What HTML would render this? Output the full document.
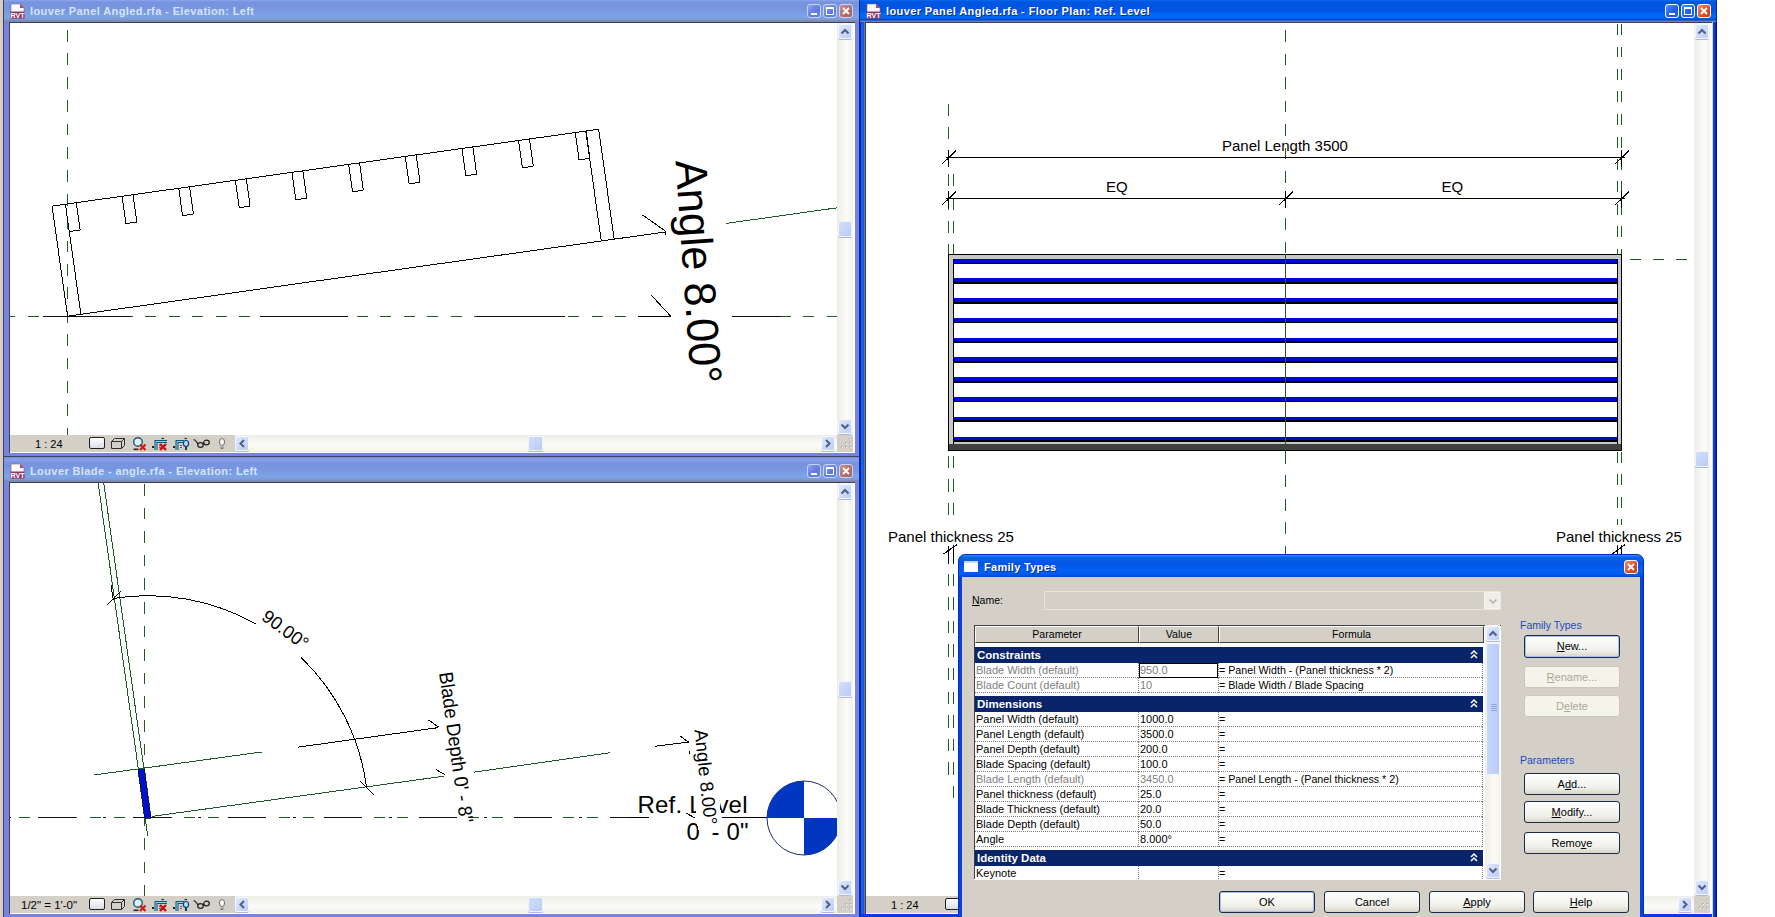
<!DOCTYPE html>
<html><head><meta charset="utf-8">
<style>
*{box-sizing:border-box}
body{margin:0;width:1775px;height:917px;position:relative;overflow:hidden;background:#fff;font-family:"Liberation Sans",sans-serif}
.a{position:absolute}
svg.a{overflow:hidden}
</style></head><body>
<div class="a" style="left:0px;top:0px;width:3px;height:917px;background:#d8ccc4"></div><div class="a" style="left:3px;top:0px;width:857px;height:457px;background:#7783e0;border:1px solid #3c4458;border-top:none"></div><div class="a" style="left:4px;top:0px;width:855px;height:22px;background:linear-gradient(#8aa6ee 0px,#7893df 2px,#7896e0 9px,#7ba5e8 17px,#8294c8 20px,#7888b0 21px)"></div><div class="a" style="left:9px;top:22px;width:846px;height:431px;background:#fff;border-left:1px solid #404050;border-top:1px solid #404050"></div><div class="a" style="left:10px;top:23px;width:843px;height:429px;background:#fff"></div><div class="a" style="left:10px;top:435px;width:843px;height:17px;background:#d4d0c8"></div><div class="a" style="left:837px;top:23px;width:16px;height:412px;background:linear-gradient(90deg,#eeede5,#fbfbf8 60%,#f3f1ea)"></div><div class="a" style="left:838px;top:24px;width:14px;height:15px;background:linear-gradient(135deg,#dfe8fe,#bccdf7);border:1px solid #f4f7ff;border-radius:2px;box-shadow:0 1px 0 #a8b8e0"><svg class="a" style="left:-1px;top:-1px" width="14" height="15"><path d="M3.5 9.5L7.0 6.0L10.5 9.5" fill="none" stroke="#4d6185" stroke-width="2"/></svg></div><div class="a" style="left:838px;top:419px;width:14px;height:15px;background:linear-gradient(135deg,#dfe8fe,#bccdf7);border:1px solid #f4f7ff;border-radius:2px;box-shadow:0 1px 0 #a8b8e0"><svg class="a" style="left:-1px;top:-1px" width="14" height="15"><path d="M3.5 5.5L7.0 9.0L10.5 5.5" fill="none" stroke="#4d6185" stroke-width="2"/></svg></div><div class="a" style="left:838px;top:221px;width:14px;height:16px;background:linear-gradient(135deg,#d3defb,#b9cbf5);border:1px solid #f0f4ff;border-radius:2px;box-shadow:0 1px 0 #a8b8e0"></div><div class="a" style="left:235px;top:435px;width:602px;height:17px;background:linear-gradient(#eeede5,#fbfbf8 60%,#f3f1ea)"></div><div class="a" style="left:235px;top:436px;width:14px;height:15px;background:linear-gradient(135deg,#dfe8fe,#bccdf7);border:1px solid #f4f7ff;border-radius:2px;box-shadow:0 1px 0 #a8b8e0"><svg class="a" style="left:-1px;top:-1px" width="14" height="15"><path d="M9.0 4.0L5.5 7.5L9.0 11.0" fill="none" stroke="#4d6185" stroke-width="2"/></svg></div><div class="a" style="left:821px;top:436px;width:14px;height:15px;background:linear-gradient(135deg,#dfe8fe,#bccdf7);border:1px solid #f4f7ff;border-radius:2px;box-shadow:0 1px 0 #a8b8e0"><svg class="a" style="left:-1px;top:-1px" width="14" height="15"><path d="M5.0 4.0L8.5 7.5L5.0 11.0" fill="none" stroke="#4d6185" stroke-width="2"/></svg></div><div class="a" style="left:528px;top:436px;width:15px;height:15px;background:linear-gradient(135deg,#d3defb,#b9cbf5);border:1px solid #f0f4ff;border-radius:2px;box-shadow:0 1px 0 #a8b8e0"></div><div class="a" style="left:837px;top:435px;width:16px;height:17px;background:#d4d0c8"><svg class="a" style="left:1px;top:0" width="15" height="17"><rect x="11" y="11" width="2" height="2" fill="#b8b4a8"/><rect x="12" y="12" width="1" height="1" fill="#fff"/><rect x="7" y="11" width="2" height="2" fill="#b8b4a8"/><rect x="8" y="12" width="1" height="1" fill="#fff"/><rect x="3" y="11" width="2" height="2" fill="#b8b4a8"/><rect x="4" y="12" width="1" height="1" fill="#fff"/><rect x="11" y="7" width="2" height="2" fill="#b8b4a8"/><rect x="12" y="8" width="1" height="1" fill="#fff"/><rect x="7" y="7" width="2" height="2" fill="#b8b4a8"/><rect x="8" y="8" width="1" height="1" fill="#fff"/><rect x="11" y="3" width="2" height="2" fill="#b8b4a8"/><rect x="12" y="4" width="1" height="1" fill="#fff"/></svg></div><svg class="a" style="left:10px;top:3px" width="15" height="16" viewBox="0 0 15 16"><path d="M1 1h9l4 4v10H1z" fill="#fafafa" stroke="#8a6a8a" stroke-width="0.6"/><path d="M10 1v4h4" fill="#c04070"/><rect x="0.5" y="8.5" width="14" height="7" fill="#8a3a6a"/><text x="7.5" y="15" font-family="Liberation Sans" font-weight="bold" font-size="7.2" fill="#fff" text-anchor="middle">RVT</text></svg><div class="a" style="left:30px;top:3px;width:500px;height:16px;font:bold 11px 'Liberation Sans',sans-serif;letter-spacing:0.4px;color:#d8e2f6;white-space:nowrap;line-height:16px;">louver Panel Angled.rfa - Elevation: Left</div><div class="a" style="left:807px;top:4px;width:14px;height:14px;background:linear-gradient(135deg,#8da2f0,#5f7ae0 60%,#6c84e4);border:1px solid #c8d4fa;border-radius:3px"><div class="a" style="left:3px;top:8px;width:6px;height:2px;background:#fff"></div></div><div class="a" style="left:823px;top:4px;width:14px;height:14px;background:linear-gradient(135deg,#8da2f0,#5f7ae0 60%,#6c84e4);border:1px solid #c8d4fa;border-radius:3px"><div class="a" style="left:2px;top:2px;width:8px;height:8px;border:1px solid #fff;border-top-width:2px"></div></div><div class="a" style="left:839px;top:4px;width:14px;height:14px;background:linear-gradient(135deg,#c89090,#b46a6a 60%,#a86060);border:1px solid #c8d4fa;border-radius:3px"><svg class="a" style="left:0;top:0" width="12" height="12"><path d="M3 3L9 9M9 3L3 9" stroke="#fff" stroke-width="1.8"/></svg></div><div class="a" style="left:10px;top:436px;width:76px;height:17px;font:11px 'Liberation Sans',sans-serif;color:#000;line-height:17px;padding-left:25px;white-space:nowrap">1 : 24</div><div class="a" style="left:89px;top:437px;width:16px;height:12px;background:linear-gradient(#fff,#dcdce8);border:1.5px solid #202020;border-radius:2px"></div><svg class="a" style="left:110px;top:436px" width="16" height="14"><path d="M1.5 5.5h10v7h-10z M1.5 5.5l3-3h10l-3 3 M14.5 2.5v7l-3 3" fill="none" stroke="#303030" stroke-width="1"/></svg><svg class="a" style="left:132px;top:436px" width="16" height="15"><circle cx="6" cy="6" r="4.3" fill="#d8f0ff" stroke="#1c5a6a" stroke-width="1.4"/><path d="M1.5 13.3h5" stroke="#402030" stroke-width="1.6"/><path d="M8 8.5l5.5 5.5M13.5 8.5L8 14" stroke="#d01818" stroke-width="2.2"/></svg><svg class="a" style="left:151px;top:436px" width="18" height="15"><path d="M1 11h2" stroke="#202020" stroke-width="2"/><path d="M5 14V5.5H16" fill="none" stroke="#12506e" stroke-width="3"/><path d="M5 14V5.5H16" fill="none" stroke="#7ae0ff" stroke-width="1"/><path d="M8 9.5h2M8 11.5h2" stroke="#a04060" stroke-width="1"/><path d="M9 8l6 6M15 8l-6 6" stroke="#c81010" stroke-width="2.4"/><path d="M10.5 2.5h2.5" stroke="#303030" stroke-width="1.2"/></svg><svg class="a" style="left:172px;top:436px" width="18" height="15"><path d="M1 11h2" stroke="#202020" stroke-width="2"/><path d="M5 14V5.5H12" fill="none" stroke="#12506e" stroke-width="3"/><path d="M5 14V5.5H12" fill="none" stroke="#7ae0ff" stroke-width="1"/><path d="M8 9.5h2M8 11.5h2" stroke="#a04060" stroke-width="1"/><ellipse cx="14" cy="7.5" rx="2.6" ry="3" fill="#a8e8ff" stroke="#1a3a80" stroke-width="1.2"/><path d="M14 10.5v3.5" stroke="#1a3a50" stroke-width="2"/><path d="M12.5 2.5h2.5" stroke="#303030" stroke-width="1.2"/></svg><svg class="a" style="left:193px;top:436px" width="17" height="14"><path d="M0.5 3.5C2.5 3.5 3.5 6 5 8" fill="none" stroke="#202020" stroke-width="1.2"/><ellipse cx="7.5" cy="9" rx="2.8" ry="2.3" fill="none" stroke="#202020" stroke-width="1.2"/><path d="M10 8.5L11 7" stroke="#202020" stroke-width="1.1"/><ellipse cx="13.5" cy="6.5" rx="2.8" ry="2.3" fill="none" stroke="#202020" stroke-width="1.2"/></svg><svg class="a" style="left:218px;top:436px" width="8" height="14"><ellipse cx="4" cy="6" rx="2.6" ry="3.5" fill="#f4f4f4" stroke="#707070"/><path d="M3 10.5v2h2v-2" stroke="#707070" fill="none"/></svg><svg class="a" style="left:10px;top:23px" width="827" height="412" viewBox="10 23 827 412" font-family="Liberation Sans" shape-rendering="crispEdges"><line x1="67.5" y1="30" x2="67.5" y2="435" stroke="#1e5a26" stroke-width="1" stroke-dasharray="11.8 11.6" stroke-dashoffset="0" shape-rendering="crispEdges"/><line x1="10" y1="316.5" x2="838" y2="316.5" stroke="#1e5a26" stroke-width="1" stroke-dasharray="11 12.5" stroke-dashoffset="5.7" shape-rendering="crispEdges"/><line x1="10" y1="316.5" x2="838" y2="316.5" stroke="#111" stroke-width="1" stroke-dasharray="88 129" stroke-dashoffset="184" shape-rendering="crispEdges"/><g transform="translate(67.5,316) rotate(-8)" fill="none" stroke="#000" stroke-width="1"><path d="M0 0H552V-111H0Z"/><path d="M13.5 0V-111M539 0V-111"/><path d="M13.5 -111V-83.4H24.5V-111"/><path d="M70.7 -111V-83.4H81.7V-111"/><path d="M127.9 -111V-83.4H138.9V-111"/><path d="M185.1 -111V-83.4H196.1V-111"/><path d="M242.3 -111V-83.4H253.3V-111"/><path d="M299.5 -111V-83.4H310.5V-111"/><path d="M356.7 -111V-83.4H367.7V-111"/><path d="M413.9 -111V-83.4H424.9V-111"/><path d="M471.1 -111V-83.4H482.1V-111"/><path d="M528.3 -111V-83.4H539.3V-111"/></g><line x1="614.1" y1="239.2" x2="665.6" y2="231.9" stroke="#000" stroke-width="1" /><line x1="725.0" y1="223.6" x2="844.9" y2="206.7" stroke="#1e5a26" stroke-width="1" /><g transform="translate(675.5,161) rotate(86)"><rect x="-8" y="-46" width="236" height="61" fill="#fff"/><text font-size="44.5" textLength="224" lengthAdjust="spacingAndGlyphs" fill="#000">Angle 8.00°</text></g><line x1="642.4" y1="214.9" x2="665.6" y2="231.2" stroke="#000" stroke-width="1" /><line x1="665.6" y1="231.2" x2="666" y2="235" stroke="#000" stroke-width="1" /><line x1="651.1" y1="295" x2="671" y2="316.5" stroke="#000" stroke-width="1" /><line x1="638" y1="316.5" x2="671" y2="316.5" stroke="#000" stroke-width="1" /></svg><div class="a" style="left:3px;top:457px;width:857px;height:3px;background:linear-gradient(#7d8cd8,#8aa0ea)"></div><div class="a" style="left:3px;top:457px;width:1px;height:461px;background:#3c4458"></div><div class="a" style="left:3px;top:460px;width:857px;height:458px;background:#7783e0;border:1px solid #3c4458;border-top:none"></div><div class="a" style="left:4px;top:460px;width:855px;height:22px;background:linear-gradient(#8aa6ee 0px,#7893df 2px,#7896e0 9px,#7ba5e8 17px,#8294c8 20px,#7888b0 21px)"></div><div class="a" style="left:9px;top:482px;width:846px;height:432px;background:#fff;border-left:1px solid #404050;border-top:1px solid #404050"></div><div class="a" style="left:10px;top:483px;width:843px;height:430px;background:#fff"></div><div class="a" style="left:10px;top:896px;width:843px;height:17px;background:#d4d0c8"></div><div class="a" style="left:837px;top:483px;width:16px;height:413px;background:linear-gradient(90deg,#eeede5,#fbfbf8 60%,#f3f1ea)"></div><div class="a" style="left:838px;top:484px;width:14px;height:15px;background:linear-gradient(135deg,#dfe8fe,#bccdf7);border:1px solid #f4f7ff;border-radius:2px;box-shadow:0 1px 0 #a8b8e0"><svg class="a" style="left:-1px;top:-1px" width="14" height="15"><path d="M3.5 9.5L7.0 6.0L10.5 9.5" fill="none" stroke="#4d6185" stroke-width="2"/></svg></div><div class="a" style="left:838px;top:880px;width:14px;height:15px;background:linear-gradient(135deg,#dfe8fe,#bccdf7);border:1px solid #f4f7ff;border-radius:2px;box-shadow:0 1px 0 #a8b8e0"><svg class="a" style="left:-1px;top:-1px" width="14" height="15"><path d="M3.5 5.5L7.0 9.0L10.5 5.5" fill="none" stroke="#4d6185" stroke-width="2"/></svg></div><div class="a" style="left:838px;top:681px;width:14px;height:16px;background:linear-gradient(135deg,#d3defb,#b9cbf5);border:1px solid #f0f4ff;border-radius:2px;box-shadow:0 1px 0 #a8b8e0"></div><div class="a" style="left:235px;top:896px;width:602px;height:17px;background:linear-gradient(#eeede5,#fbfbf8 60%,#f3f1ea)"></div><div class="a" style="left:235px;top:897px;width:14px;height:15px;background:linear-gradient(135deg,#dfe8fe,#bccdf7);border:1px solid #f4f7ff;border-radius:2px;box-shadow:0 1px 0 #a8b8e0"><svg class="a" style="left:-1px;top:-1px" width="14" height="15"><path d="M9.0 4.0L5.5 7.5L9.0 11.0" fill="none" stroke="#4d6185" stroke-width="2"/></svg></div><div class="a" style="left:821px;top:897px;width:14px;height:15px;background:linear-gradient(135deg,#dfe8fe,#bccdf7);border:1px solid #f4f7ff;border-radius:2px;box-shadow:0 1px 0 #a8b8e0"><svg class="a" style="left:-1px;top:-1px" width="14" height="15"><path d="M5.0 4.0L8.5 7.5L5.0 11.0" fill="none" stroke="#4d6185" stroke-width="2"/></svg></div><div class="a" style="left:528px;top:897px;width:15px;height:15px;background:linear-gradient(135deg,#d3defb,#b9cbf5);border:1px solid #f0f4ff;border-radius:2px;box-shadow:0 1px 0 #a8b8e0"></div><div class="a" style="left:837px;top:896px;width:16px;height:17px;background:#d4d0c8"><svg class="a" style="left:1px;top:0" width="15" height="17"><rect x="11" y="11" width="2" height="2" fill="#b8b4a8"/><rect x="12" y="12" width="1" height="1" fill="#fff"/><rect x="7" y="11" width="2" height="2" fill="#b8b4a8"/><rect x="8" y="12" width="1" height="1" fill="#fff"/><rect x="3" y="11" width="2" height="2" fill="#b8b4a8"/><rect x="4" y="12" width="1" height="1" fill="#fff"/><rect x="11" y="7" width="2" height="2" fill="#b8b4a8"/><rect x="12" y="8" width="1" height="1" fill="#fff"/><rect x="7" y="7" width="2" height="2" fill="#b8b4a8"/><rect x="8" y="8" width="1" height="1" fill="#fff"/><rect x="11" y="3" width="2" height="2" fill="#b8b4a8"/><rect x="12" y="4" width="1" height="1" fill="#fff"/></svg></div><svg class="a" style="left:10px;top:463px" width="15" height="16" viewBox="0 0 15 16"><path d="M1 1h9l4 4v10H1z" fill="#fafafa" stroke="#8a6a8a" stroke-width="0.6"/><path d="M10 1v4h4" fill="#c04070"/><rect x="0.5" y="8.5" width="14" height="7" fill="#8a3a6a"/><text x="7.5" y="15" font-family="Liberation Sans" font-weight="bold" font-size="7.2" fill="#fff" text-anchor="middle">RVT</text></svg><div class="a" style="left:30px;top:463px;width:500px;height:16px;font:bold 11px 'Liberation Sans',sans-serif;letter-spacing:0.4px;color:#d8e2f6;white-space:nowrap;line-height:16px;">Louver Blade - angle.rfa - Elevation: Left</div><div class="a" style="left:807px;top:464px;width:14px;height:14px;background:linear-gradient(135deg,#8da2f0,#5f7ae0 60%,#6c84e4);border:1px solid #c8d4fa;border-radius:3px"><div class="a" style="left:3px;top:8px;width:6px;height:2px;background:#fff"></div></div><div class="a" style="left:823px;top:464px;width:14px;height:14px;background:linear-gradient(135deg,#8da2f0,#5f7ae0 60%,#6c84e4);border:1px solid #c8d4fa;border-radius:3px"><div class="a" style="left:2px;top:2px;width:8px;height:8px;border:1px solid #fff;border-top-width:2px"></div></div><div class="a" style="left:839px;top:464px;width:14px;height:14px;background:linear-gradient(135deg,#c89090,#b46a6a 60%,#a86060);border:1px solid #c8d4fa;border-radius:3px"><svg class="a" style="left:0;top:0" width="12" height="12"><path d="M3 3L9 9M9 3L3 9" stroke="#fff" stroke-width="1.8"/></svg></div><div class="a" style="left:10px;top:897px;width:76px;height:17px;font:11.5px 'Liberation Sans',sans-serif;color:#000;line-height:17px;padding-left:11px;white-space:nowrap">1/2" = 1'-0"</div><div class="a" style="left:89px;top:898px;width:16px;height:12px;background:linear-gradient(#fff,#dcdce8);border:1.5px solid #202020;border-radius:2px"></div><svg class="a" style="left:110px;top:897px" width="16" height="14"><path d="M1.5 5.5h10v7h-10z M1.5 5.5l3-3h10l-3 3 M14.5 2.5v7l-3 3" fill="none" stroke="#303030" stroke-width="1"/></svg><svg class="a" style="left:132px;top:897px" width="16" height="15"><circle cx="6" cy="6" r="4.3" fill="#d8f0ff" stroke="#1c5a6a" stroke-width="1.4"/><path d="M1.5 13.3h5" stroke="#402030" stroke-width="1.6"/><path d="M8 8.5l5.5 5.5M13.5 8.5L8 14" stroke="#d01818" stroke-width="2.2"/></svg><svg class="a" style="left:151px;top:897px" width="18" height="15"><path d="M1 11h2" stroke="#202020" stroke-width="2"/><path d="M5 14V5.5H16" fill="none" stroke="#12506e" stroke-width="3"/><path d="M5 14V5.5H16" fill="none" stroke="#7ae0ff" stroke-width="1"/><path d="M8 9.5h2M8 11.5h2" stroke="#a04060" stroke-width="1"/><path d="M9 8l6 6M15 8l-6 6" stroke="#c81010" stroke-width="2.4"/><path d="M10.5 2.5h2.5" stroke="#303030" stroke-width="1.2"/></svg><svg class="a" style="left:172px;top:897px" width="18" height="15"><path d="M1 11h2" stroke="#202020" stroke-width="2"/><path d="M5 14V5.5H12" fill="none" stroke="#12506e" stroke-width="3"/><path d="M5 14V5.5H12" fill="none" stroke="#7ae0ff" stroke-width="1"/><path d="M8 9.5h2M8 11.5h2" stroke="#a04060" stroke-width="1"/><ellipse cx="14" cy="7.5" rx="2.6" ry="3" fill="#a8e8ff" stroke="#1a3a80" stroke-width="1.2"/><path d="M14 10.5v3.5" stroke="#1a3a50" stroke-width="2"/><path d="M12.5 2.5h2.5" stroke="#303030" stroke-width="1.2"/></svg><svg class="a" style="left:193px;top:897px" width="17" height="14"><path d="M0.5 3.5C2.5 3.5 3.5 6 5 8" fill="none" stroke="#202020" stroke-width="1.2"/><ellipse cx="7.5" cy="9" rx="2.8" ry="2.3" fill="none" stroke="#202020" stroke-width="1.2"/><path d="M10 8.5L11 7" stroke="#202020" stroke-width="1.1"/><ellipse cx="13.5" cy="6.5" rx="2.8" ry="2.3" fill="none" stroke="#202020" stroke-width="1.2"/></svg><svg class="a" style="left:218px;top:897px" width="8" height="14"><ellipse cx="4" cy="6" rx="2.6" ry="3.5" fill="#f4f4f4" stroke="#707070"/><path d="M3 10.5v2h2v-2" stroke="#707070" fill="none"/></svg><svg class="a" style="left:10px;top:483px" width="827" height="413" viewBox="10 483 827 413" font-family="Liberation Sans" shape-rendering="crispEdges"><line x1="144.5" y1="484" x2="144.5" y2="896" stroke="#1e5a26" stroke-width="1" stroke-dasharray="11.5 12.1" stroke-dashoffset="0" shape-rendering="crispEdges"/><line x1="10" y1="817.5" x2="630" y2="817.5" stroke="#1e5a26" stroke-width="1" stroke-dasharray="11 12.65" stroke-dashoffset="14.75" shape-rendering="crispEdges"/><line x1="10" y1="817.5" x2="630" y2="817.5" stroke="#111" stroke-width="1" stroke-dasharray="38 27 3 27.3" stroke-dashoffset="67.5" shape-rendering="crispEdges"/><line x1="98" y1="482" x2="147.75145548464658" y2="836" stroke="#1e5a26" stroke-width="1" /><line x1="103.6" y1="482" x2="144.07576039428875" y2="770" stroke="#1e5a26" stroke-width="1" /><path d="M138 769L144.3 768.2L151 818L144.5 818Z" fill="#0010d0" stroke="#000" stroke-width="0.8"/><line x1="93.9" y1="775" x2="261.6" y2="752" stroke="#1e5a26" stroke-width="1" /><line x1="151.8" y1="816.4" x2="443.9" y2="776.2" stroke="#1e5a26" stroke-width="1" /><line x1="473.9" y1="772.2" x2="609.9" y2="752.7" stroke="#1e5a26" stroke-width="1" /><line x1="297.6" y1="747.2" x2="437.7" y2="727.7" stroke="#000" stroke-width="1" /><line x1="428.5" y1="720" x2="438.5" y2="727" stroke="#000" stroke-width="1" /><line x1="436" y1="769.6" x2="445" y2="774.7" stroke="#000" stroke-width="1" /><text transform="translate(439,673) rotate(82)" font-size="19.5" textLength="152" lengthAdjust="spacingAndGlyphs" fill="#000">Blade Depth 0' - 8"</text><path d="M113.5 598.4A220.5 220.5 0 0 1 256.6 624.3" fill="none" stroke="#000" stroke-width="1"/><path d="M301.2 657.6A220.5 220.5 0 0 1 366.6 787.4" fill="none" stroke="#000" stroke-width="1"/><line x1="106.50620045862911" y1="605.4147208987722" x2="120.50620045862911" y2="591.4147208987722" stroke="#000" stroke-width="1" /><line x1="111.00620045862911" y1="585.4147208987722" x2="113.50620045862911" y2="600.4147208987722" stroke="#000" stroke-width="1" /><line x1="359.6135919329252" y1="780.4189746154786" x2="373.6135919329252" y2="794.4189746154786" stroke="#000" stroke-width="1" /><text transform="translate(260.5,619) rotate(36.5)" font-size="18.2" fill="#000">90.00°</text><line x1="655" y1="746.2" x2="689" y2="742" stroke="#000" stroke-width="1" /><line x1="679.9" y1="735.9" x2="689" y2="742.4" stroke="#000" stroke-width="1" /><line x1="689.5" y1="744" x2="689.5" y2="758" stroke="#000" stroke-width="1" stroke-dasharray="3 4"/><line x1="686" y1="813" x2="695" y2="818" stroke="#000" stroke-width="1" /><line x1="722" y1="817.5" x2="770" y2="817.5" stroke="#000" stroke-width="1" shape-rendering="crispEdges"/><line x1="630" y1="817.5" x2="649" y2="817.5" stroke="#000" stroke-width="1" shape-rendering="crispEdges"/><text x="637.5" y="812.8" font-size="24" textLength="110" lengthAdjust="spacing" fill="#000">Ref. Level</text><text x="686.5" y="840" font-size="24" textLength="62" lengthAdjust="spacing" fill="#000">0' - 0"</text><g transform="translate(694.5,730) rotate(84)"><rect x="-3" y="-17.5" width="103" height="24.5" fill="#fff"/><text x="0" y="0" font-size="18.5" fill="#000">Angle 8.00°</text></g><g transform="translate(804,818)" shape-rendering="geometricPrecision"><circle r="37" fill="#fff" stroke="#1c2c70" stroke-width="1"/><path d="M0 0V-37A37 37 0 0 0 -37 0Z" fill="#0036c0"/><path d="M0 0V37A37 37 0 0 0 37 0Z" fill="#0036c0"/></g></svg><div class="a" style="left:859px;top:0px;width:858px;height:918px;background:#0b3bd8;border:1px solid #0b2a9a;border-top:none"></div><div class="a" style="left:860px;top:0px;width:856px;height:22px;background:linear-gradient(#0a6af0 0px,#0055e0 2px,#0055e2 12px,#0066f8 13px,#0066f8 18px,#0a40c0 20px,#6080c0 21px)"></div><div class="a" style="left:865px;top:22px;width:847px;height:892px;background:#fff;border-left:1px solid #404050;border-top:1px solid #404050"></div><div class="a" style="left:866px;top:23px;width:844px;height:890px;background:#fff"></div><div class="a" style="left:866px;top:896px;width:844px;height:17px;background:#d4d0c8"></div><div class="a" style="left:1694px;top:23px;width:16px;height:873px;background:linear-gradient(90deg,#eeede5,#fbfbf8 60%,#f3f1ea)"></div><div class="a" style="left:1695px;top:24px;width:14px;height:15px;background:linear-gradient(135deg,#dfe8fe,#bccdf7);border:1px solid #f4f7ff;border-radius:2px;box-shadow:0 1px 0 #a8b8e0"><svg class="a" style="left:-1px;top:-1px" width="14" height="15"><path d="M3.5 9.5L7.0 6.0L10.5 9.5" fill="none" stroke="#4d6185" stroke-width="2"/></svg></div><div class="a" style="left:1695px;top:880px;width:14px;height:15px;background:linear-gradient(135deg,#dfe8fe,#bccdf7);border:1px solid #f4f7ff;border-radius:2px;box-shadow:0 1px 0 #a8b8e0"><svg class="a" style="left:-1px;top:-1px" width="14" height="15"><path d="M3.5 5.5L7.0 9.0L10.5 5.5" fill="none" stroke="#4d6185" stroke-width="2"/></svg></div><div class="a" style="left:1695px;top:451px;width:14px;height:16px;background:linear-gradient(135deg,#d3defb,#b9cbf5);border:1px solid #f0f4ff;border-radius:2px;box-shadow:0 1px 0 #a8b8e0"></div><div class="a" style="left:1091px;top:896px;width:603px;height:17px;background:linear-gradient(#eeede5,#fbfbf8 60%,#f3f1ea)"></div><div class="a" style="left:1091px;top:897px;width:14px;height:15px;background:linear-gradient(135deg,#dfe8fe,#bccdf7);border:1px solid #f4f7ff;border-radius:2px;box-shadow:0 1px 0 #a8b8e0"><svg class="a" style="left:-1px;top:-1px" width="14" height="15"><path d="M9.0 4.0L5.5 7.5L9.0 11.0" fill="none" stroke="#4d6185" stroke-width="2"/></svg></div><div class="a" style="left:1678px;top:897px;width:14px;height:15px;background:linear-gradient(135deg,#dfe8fe,#bccdf7);border:1px solid #f4f7ff;border-radius:2px;box-shadow:0 1px 0 #a8b8e0"><svg class="a" style="left:-1px;top:-1px" width="14" height="15"><path d="M5.0 4.0L8.5 7.5L5.0 11.0" fill="none" stroke="#4d6185" stroke-width="2"/></svg></div><div class="a" style="left:1200px;top:897px;width:15px;height:15px;background:linear-gradient(135deg,#d3defb,#b9cbf5);border:1px solid #f0f4ff;border-radius:2px;box-shadow:0 1px 0 #a8b8e0"></div><div class="a" style="left:1694px;top:896px;width:16px;height:17px;background:#d4d0c8"><svg class="a" style="left:1px;top:0" width="15" height="17"><rect x="11" y="11" width="2" height="2" fill="#b8b4a8"/><rect x="12" y="12" width="1" height="1" fill="#fff"/><rect x="7" y="11" width="2" height="2" fill="#b8b4a8"/><rect x="8" y="12" width="1" height="1" fill="#fff"/><rect x="3" y="11" width="2" height="2" fill="#b8b4a8"/><rect x="4" y="12" width="1" height="1" fill="#fff"/><rect x="11" y="7" width="2" height="2" fill="#b8b4a8"/><rect x="12" y="8" width="1" height="1" fill="#fff"/><rect x="7" y="7" width="2" height="2" fill="#b8b4a8"/><rect x="8" y="8" width="1" height="1" fill="#fff"/><rect x="11" y="3" width="2" height="2" fill="#b8b4a8"/><rect x="12" y="4" width="1" height="1" fill="#fff"/></svg></div><svg class="a" style="left:866px;top:3px" width="15" height="16" viewBox="0 0 15 16"><path d="M1 1h9l4 4v10H1z" fill="#fafafa" stroke="#8a6a8a" stroke-width="0.6"/><path d="M10 1v4h4" fill="#c04070"/><rect x="0.5" y="8.5" width="14" height="7" fill="#8a3a6a"/><text x="7.5" y="15" font-family="Liberation Sans" font-weight="bold" font-size="7.2" fill="#fff" text-anchor="middle">RVT</text></svg><div class="a" style="left:886px;top:3px;width:500px;height:16px;font:bold 11px 'Liberation Sans',sans-serif;letter-spacing:0.4px;color:#ffffff;white-space:nowrap;line-height:16px;text-shadow:1px 1px 0 #0a2a90;">louver Panel Angled.rfa - Floor Plan: Ref. Level</div><div class="a" style="left:1665px;top:4px;width:14px;height:14px;background:linear-gradient(135deg,#4f8cff,#1f5ce8 60%,#2a60e0);border:1px solid #ffffff;border-radius:3px"><div class="a" style="left:3px;top:8px;width:6px;height:2px;background:#fff"></div></div><div class="a" style="left:1681px;top:4px;width:14px;height:14px;background:linear-gradient(135deg,#4f8cff,#1f5ce8 60%,#2a60e0);border:1px solid #ffffff;border-radius:3px"><div class="a" style="left:2px;top:2px;width:8px;height:8px;border:1px solid #fff;border-top-width:2px"></div></div><div class="a" style="left:1697px;top:4px;width:14px;height:14px;background:linear-gradient(135deg,#f28a6a,#e0502a 55%,#c8401c);border:1px solid #ffffff;border-radius:3px"><svg class="a" style="left:0;top:0" width="12" height="12"><path d="M3 3L9 9M9 3L3 9" stroke="#fff" stroke-width="1.8"/></svg></div><div class="a" style="left:866px;top:897px;width:76px;height:17px;font:11px 'Liberation Sans',sans-serif;color:#000;line-height:17px;padding-left:25px;white-space:nowrap">1 : 24</div><div class="a" style="left:945px;top:898px;width:16px;height:12px;background:linear-gradient(#fff,#dcdce8);border:1.5px solid #202020;border-radius:2px"></div><svg class="a" style="left:966px;top:897px" width="16" height="14"><path d="M1.5 5.5h10v7h-10z M1.5 5.5l3-3h10l-3 3 M14.5 2.5v7l-3 3" fill="none" stroke="#303030" stroke-width="1"/></svg><svg class="a" style="left:988px;top:897px" width="16" height="15"><circle cx="6" cy="6" r="4.3" fill="#d8f0ff" stroke="#1c5a6a" stroke-width="1.4"/><path d="M1.5 13.3h5" stroke="#402030" stroke-width="1.6"/><path d="M8 8.5l5.5 5.5M13.5 8.5L8 14" stroke="#d01818" stroke-width="2.2"/></svg><svg class="a" style="left:1007px;top:897px" width="18" height="15"><path d="M1 11h2" stroke="#202020" stroke-width="2"/><path d="M5 14V5.5H16" fill="none" stroke="#12506e" stroke-width="3"/><path d="M5 14V5.5H16" fill="none" stroke="#7ae0ff" stroke-width="1"/><path d="M8 9.5h2M8 11.5h2" stroke="#a04060" stroke-width="1"/><path d="M9 8l6 6M15 8l-6 6" stroke="#c81010" stroke-width="2.4"/><path d="M10.5 2.5h2.5" stroke="#303030" stroke-width="1.2"/></svg><svg class="a" style="left:1028px;top:897px" width="18" height="15"><path d="M1 11h2" stroke="#202020" stroke-width="2"/><path d="M5 14V5.5H12" fill="none" stroke="#12506e" stroke-width="3"/><path d="M5 14V5.5H12" fill="none" stroke="#7ae0ff" stroke-width="1"/><path d="M8 9.5h2M8 11.5h2" stroke="#a04060" stroke-width="1"/><ellipse cx="14" cy="7.5" rx="2.6" ry="3" fill="#a8e8ff" stroke="#1a3a80" stroke-width="1.2"/><path d="M14 10.5v3.5" stroke="#1a3a50" stroke-width="2"/><path d="M12.5 2.5h2.5" stroke="#303030" stroke-width="1.2"/></svg><svg class="a" style="left:1049px;top:897px" width="17" height="14"><path d="M0.5 3.5C2.5 3.5 3.5 6 5 8" fill="none" stroke="#202020" stroke-width="1.2"/><ellipse cx="7.5" cy="9" rx="2.8" ry="2.3" fill="none" stroke="#202020" stroke-width="1.2"/><path d="M10 8.5L11 7" stroke="#202020" stroke-width="1.1"/><ellipse cx="13.5" cy="6.5" rx="2.8" ry="2.3" fill="none" stroke="#202020" stroke-width="1.2"/></svg><svg class="a" style="left:1074px;top:897px" width="8" height="14"><ellipse cx="4" cy="6" rx="2.6" ry="3.5" fill="#f4f4f4" stroke="#707070"/><path d="M3 10.5v2h2v-2" stroke="#707070" fill="none"/></svg><svg class="a" style="left:866px;top:23px" width="828" height="873" viewBox="866 23 828 873" font-family="Liberation Sans" shape-rendering="crispEdges"><line x1="948.5" y1="104" x2="948.5" y2="254" stroke="#1e5a26" stroke-width="1" stroke-dasharray="12 11.4" stroke-dashoffset="0" shape-rendering="crispEdges"/><line x1="953.5" y1="174.2" x2="953.5" y2="254" stroke="#1e5a26" stroke-width="1" stroke-dasharray="12 11.4" stroke-dashoffset="0" shape-rendering="crispEdges"/><line x1="948.5" y1="455.5" x2="948.5" y2="775" stroke="#1e5a26" stroke-width="1" stroke-dasharray="12.5 11.1" stroke-dashoffset="0" shape-rendering="crispEdges"/><line x1="953.5" y1="455.5" x2="953.5" y2="801" stroke="#1e5a26" stroke-width="1" stroke-dasharray="12.5 11.1" stroke-dashoffset="0" shape-rendering="crispEdges"/><line x1="1285.5" y1="30" x2="1285.5" y2="254" stroke="#1e5a26" stroke-width="1" stroke-dasharray="11.5 12" stroke-dashoffset="0" shape-rendering="crispEdges"/><line x1="1285.5" y1="254" x2="1285.5" y2="452" stroke="#1e5a26" stroke-width="1" /><line x1="1285.5" y1="452" x2="1285.5" y2="896" stroke="#1e5a26" stroke-width="1" stroke-dasharray="12 11.4" stroke-dashoffset="0" shape-rendering="crispEdges"/><line x1="1617.5" y1="24" x2="1617.5" y2="896" stroke="#1e5a26" stroke-width="1" stroke-dasharray="11 11.5" stroke-dashoffset="0" shape-rendering="crispEdges"/><line x1="1621.5" y1="24" x2="1621.5" y2="896" stroke="#1e5a26" stroke-width="1" stroke-dasharray="11 11.5" stroke-dashoffset="0" shape-rendering="crispEdges"/><line x1="1630" y1="259.5" x2="1694" y2="259.5" stroke="#1e5a26" stroke-width="1" stroke-dasharray="11 12" stroke-dashoffset="0" shape-rendering="crispEdges"/><line x1="946" y1="157.5" x2="1625" y2="157.5" stroke="#000" stroke-width="1" shape-rendering="crispEdges"/><line x1="946" y1="198.5" x2="1625" y2="198.5" stroke="#000" stroke-width="1" shape-rendering="crispEdges"/><line x1="948.5" y1="150" x2="948.5" y2="167" stroke="#000" stroke-width="1" shape-rendering="crispEdges"/><line x1="942.0" y1="164" x2="956.0" y2="150.5" stroke="#000" stroke-width="1.2" /><line x1="1621.5" y1="150" x2="1621.5" y2="167" stroke="#000" stroke-width="1" shape-rendering="crispEdges"/><line x1="1615.0" y1="164" x2="1629.0" y2="150.5" stroke="#000" stroke-width="1.2" /><line x1="948.5" y1="191" x2="948.5" y2="208" stroke="#000" stroke-width="1" shape-rendering="crispEdges"/><line x1="942.0" y1="205" x2="956.0" y2="191.5" stroke="#000" stroke-width="1.2" /><line x1="1285.5" y1="191" x2="1285.5" y2="208" stroke="#000" stroke-width="1" shape-rendering="crispEdges"/><line x1="1279.0" y1="205" x2="1293.0" y2="191.5" stroke="#000" stroke-width="1.2" /><line x1="1621.5" y1="191" x2="1621.5" y2="208" stroke="#000" stroke-width="1" shape-rendering="crispEdges"/><line x1="1615.0" y1="205" x2="1629.0" y2="191.5" stroke="#000" stroke-width="1.2" /><text x="1222" y="150.5" font-size="15" fill="#000">Panel Length 3500</text><text x="1106" y="192" font-size="15" fill="#000">EQ</text><text x="1441.5" y="192" font-size="15" fill="#000">EQ</text><rect x="948" y="254" width="674" height="197" fill="#c8c8c8" /><rect x="953.5" y="259" width="663.5" height="182" fill="#fff" /><rect x="948" y="444" width="674" height="7" fill="#404040" /><rect x="953.5" y="259" width="663.5" height="3.6" fill="#0008d8"/><rect x="953.5" y="262.6" width="663.5" height="1.8" fill="#000"/><rect x="953.5" y="278.3" width="663.5" height="3.6" fill="#0008d8"/><rect x="953.5" y="281.90000000000003" width="663.5" height="1.8" fill="#000"/><rect x="953.5" y="298.2" width="663.5" height="3.6" fill="#0008d8"/><rect x="953.5" y="301.8" width="663.5" height="1.8" fill="#000"/><rect x="953.5" y="318" width="663.5" height="3.6" fill="#0008d8"/><rect x="953.5" y="321.6" width="663.5" height="1.8" fill="#000"/><rect x="953.5" y="337.6" width="663.5" height="3.6" fill="#0008d8"/><rect x="953.5" y="341.20000000000005" width="663.5" height="1.8" fill="#000"/><rect x="953.5" y="357.3" width="663.5" height="3.6" fill="#0008d8"/><rect x="953.5" y="360.90000000000003" width="663.5" height="1.8" fill="#000"/><rect x="953.5" y="377.2" width="663.5" height="3.6" fill="#0008d8"/><rect x="953.5" y="380.8" width="663.5" height="1.8" fill="#000"/><rect x="953.5" y="397" width="663.5" height="3.6" fill="#0008d8"/><rect x="953.5" y="400.6" width="663.5" height="1.8" fill="#000"/><rect x="953.5" y="416.6" width="663.5" height="3.6" fill="#0008d8"/><rect x="953.5" y="420.20000000000005" width="663.5" height="1.8" fill="#000"/><rect x="953.5" y="436.5" width="663.5" height="3.6" fill="#0008d8"/><rect x="953.5" y="440.1" width="663.5" height="1.8" fill="#000"/><path d="M948.5 254.5H1621.5V450.5H948.5Z M953.5 259V444 M1617 259V444" fill="none" stroke="#000" stroke-width="1" shape-rendering="crispEdges"/><line x1="1285.5" y1="254" x2="1285.5" y2="451" stroke="#1e5a26" stroke-width="1" shape-rendering="crispEdges"/><rect x="886" y="525" width="130" height="20" fill="#fff"/><rect x="1553" y="525" width="131" height="20" fill="#fff"/><text x="888" y="541.8" font-size="15" fill="#000">Panel thickness 25</text><text x="1556" y="541.8" font-size="15" fill="#000">Panel thickness 25</text><line x1="948.5" y1="546" x2="948.5" y2="564" stroke="#000" stroke-width="1" shape-rendering="crispEdges"/><line x1="953.5" y1="545" x2="953.5" y2="564" stroke="#000" stroke-width="1" shape-rendering="crispEdges"/><line x1="943.5" y1="554" x2="957.0" y2="544.5" stroke="#000" stroke-width="1.2" /><line x1="1617.5" y1="546" x2="1617.5" y2="564" stroke="#000" stroke-width="1" shape-rendering="crispEdges"/><line x1="1621.5" y1="545" x2="1621.5" y2="564" stroke="#000" stroke-width="1" shape-rendering="crispEdges"/><line x1="1612.5" y1="554" x2="1625.0" y2="544.5" stroke="#000" stroke-width="1.2" /></svg><div class="a" style="left:860px;top:22px;width:5px;height:892px;background:linear-gradient(90deg,#0a1cc8 0,#0a1cc8 1px,#1462f4 1px,#1462f4 3px,#1a58c0 3px,#1a58c0 4px,#5a78b0 4px)"></div><div class="a" style="left:1712px;top:22px;width:5px;height:895px;background:linear-gradient(90deg,#c8d8f0 0,#c8d8f0 1px,#1440c8 1px,#1440c8 3px,#0a28b0 3px,#0a28b0 4px,#001070 4px)"></div><div class="a" style="left:958px;top:554px;width:686px;height:367px;background:#0842d8;border-radius:7px 7px 0 0;border:1px solid #0030b8"></div><div class="a" style="left:959px;top:555px;width:684px;height:22px;background:linear-gradient(#3d8ef8 0px,#0b62ec 2px,#0054e4 9px,#0062f4 15px,#005cf0 19px,#0046d0 22px);border-radius:6px 6px 0 0"></div><div class="a" style="left:962px;top:577px;width:678px;height:340px;background:#d4d0c8"></div><div class="a" style="left:964px;top:561px;width:14px;height:11px;background:#fdfdfd;border-top:2px solid #c8d8f8"></div><div class="a" style="left:984px;top:559px;width:200px;height:16px;font:bold 11px 'Liberation Sans',sans-serif;letter-spacing:0.3px;color:#fff;line-height:16px;white-space:nowrap;text-shadow:1px 1px 0 #0a2a80">Family Types</div><div class="a" style="left:1624px;top:560px;width:14px;height:14px;background:linear-gradient(135deg,#f09070,#e04a20 60%,#c83a10);border:1px solid #fff;border-radius:3px"><svg class="a" style="left:0;top:0" width="12" height="12"><path d="M3 3L9 9M9 3L3 9" stroke="#fff" stroke-width="1.8"/></svg></div><div class="a" style="left:972px;top:593px;width:60px;height:14px;font:10.5px 'Liberation Sans',sans-serif;color:#000;line-height:14px"><u>N</u>ame:</div><div class="a" style="left:1044px;top:591px;width:457px;height:19px;background:#d4d0c8;border:1px solid #e8e6dc"></div><div class="a" style="left:1484px;top:592px;width:16px;height:17px;background:#eeede6;border:1px solid #f6f5f0"><svg class="a" style="left:0;top:0" width="16" height="17"><path d="M4.5 6.5L8 10L11.5 6.5" fill="none" stroke="#b0aca0" stroke-width="1.5"/></svg></div><div class="a" style="left:974px;top:625px;width:527px;height:255px;background:#fff;border-left:1px solid #404040;border-top:1px solid #404040"></div><div class="a" style="left:975px;top:626px;width:164px;height:17px;background:#d4d0c8;border-left:1px solid #fff;border-top:1px solid #fff;border-right:1px solid #404040;border-bottom:1px solid #404040;font:10.6px 'Liberation Sans',sans-serif;text-align:center;line-height:15px;color:#000">Parameter</div><div class="a" style="left:1139px;top:626px;width:80px;height:17px;background:#d4d0c8;border-left:1px solid #fff;border-top:1px solid #fff;border-right:1px solid #404040;border-bottom:1px solid #404040;font:10.6px 'Liberation Sans',sans-serif;text-align:center;line-height:15px;color:#000">Value</div><div class="a" style="left:1219px;top:626px;width:265px;height:17px;background:#d4d0c8;border-left:1px solid #fff;border-top:1px solid #fff;border-right:1px solid #404040;border-bottom:1px solid #404040;font:10.6px 'Liberation Sans',sans-serif;text-align:center;line-height:15px;color:#000">Formula</div><div class="a" style="left:975px;top:647px;width:508px;height:16px;background:#0a246a;font:bold 11.5px 'Liberation Sans',sans-serif;color:#fff;line-height:16px;padding-left:2px">Constraints</div><svg class="a" style="left:1468px;top:648px" width="12" height="14"><path d="M3 6L6 3L9 6M3 10L6 7L9 10" fill="none" stroke="#fff" stroke-width="1.5"/></svg><div class="a" style="left:975px;top:663px;width:508px;height:15px;background-image:linear-gradient(90deg,#808080 50%,transparent 50%);background-size:2px 1px;background-repeat:repeat-x;background-position:0 14px"></div><div class="a" style="left:976px;top:663px;width:160px;height:14px;font:11px 'Liberation Sans',sans-serif;color:#808080;line-height:15px;white-space:nowrap">Blade Width (default)</div><div class="a" style="left:1140px;top:663px;width:78px;height:14px;font:11px 'Liberation Sans',sans-serif;color:#808080;line-height:15px;white-space:nowrap">950.0</div><div class="a" style="left:1219px;top:663px;width:264px;height:14px;font:10.7px 'Liberation Sans',sans-serif;color:#000;line-height:15px;white-space:nowrap">= Panel Width - (Panel thickness * 2)</div><div class="a" style="left:1138px;top:663px;width:1px;height:15px;background-image:linear-gradient(#808080 50%,transparent 50%);background-size:1px 2px"></div><div class="a" style="left:1218px;top:663px;width:1px;height:15px;background-image:linear-gradient(#808080 50%,transparent 50%);background-size:1px 2px"></div><div class="a" style="left:1482px;top:663px;width:1px;height:15px;background-image:linear-gradient(#808080 50%,transparent 50%);background-size:1px 2px"></div><div class="a" style="left:975px;top:678px;width:508px;height:15px;background-image:linear-gradient(90deg,#808080 50%,transparent 50%);background-size:2px 1px;background-repeat:repeat-x;background-position:0 14px"></div><div class="a" style="left:976px;top:678px;width:160px;height:14px;font:11px 'Liberation Sans',sans-serif;color:#808080;line-height:15px;white-space:nowrap">Blade Count (default)</div><div class="a" style="left:1140px;top:678px;width:78px;height:14px;font:11px 'Liberation Sans',sans-serif;color:#808080;line-height:15px;white-space:nowrap">10</div><div class="a" style="left:1219px;top:678px;width:264px;height:14px;font:10.7px 'Liberation Sans',sans-serif;color:#000;line-height:15px;white-space:nowrap">= Blade Width / Blade Spacing</div><div class="a" style="left:1138px;top:678px;width:1px;height:15px;background-image:linear-gradient(#808080 50%,transparent 50%);background-size:1px 2px"></div><div class="a" style="left:1218px;top:678px;width:1px;height:15px;background-image:linear-gradient(#808080 50%,transparent 50%);background-size:1px 2px"></div><div class="a" style="left:1482px;top:678px;width:1px;height:15px;background-image:linear-gradient(#808080 50%,transparent 50%);background-size:1px 2px"></div><div class="a" style="left:975px;top:696px;width:508px;height:16px;background:#0a246a;font:bold 11.5px 'Liberation Sans',sans-serif;color:#fff;line-height:16px;padding-left:2px">Dimensions</div><svg class="a" style="left:1468px;top:697px" width="12" height="14"><path d="M3 6L6 3L9 6M3 10L6 7L9 10" fill="none" stroke="#fff" stroke-width="1.5"/></svg><div class="a" style="left:975px;top:712px;width:508px;height:15px;background-image:linear-gradient(90deg,#808080 50%,transparent 50%);background-size:2px 1px;background-repeat:repeat-x;background-position:0 14px"></div><div class="a" style="left:976px;top:712px;width:160px;height:14px;font:11px 'Liberation Sans',sans-serif;color:#000;line-height:15px;white-space:nowrap">Panel Width (default)</div><div class="a" style="left:1140px;top:712px;width:78px;height:14px;font:11px 'Liberation Sans',sans-serif;color:#000;line-height:15px;white-space:nowrap">1000.0</div><div class="a" style="left:1219px;top:712px;width:264px;height:14px;font:10.7px 'Liberation Sans',sans-serif;color:#000;line-height:15px;white-space:nowrap">=</div><div class="a" style="left:1138px;top:712px;width:1px;height:15px;background-image:linear-gradient(#808080 50%,transparent 50%);background-size:1px 2px"></div><div class="a" style="left:1218px;top:712px;width:1px;height:15px;background-image:linear-gradient(#808080 50%,transparent 50%);background-size:1px 2px"></div><div class="a" style="left:1482px;top:712px;width:1px;height:15px;background-image:linear-gradient(#808080 50%,transparent 50%);background-size:1px 2px"></div><div class="a" style="left:975px;top:727px;width:508px;height:15px;background-image:linear-gradient(90deg,#808080 50%,transparent 50%);background-size:2px 1px;background-repeat:repeat-x;background-position:0 14px"></div><div class="a" style="left:976px;top:727px;width:160px;height:14px;font:11px 'Liberation Sans',sans-serif;color:#000;line-height:15px;white-space:nowrap">Panel Length (default)</div><div class="a" style="left:1140px;top:727px;width:78px;height:14px;font:11px 'Liberation Sans',sans-serif;color:#000;line-height:15px;white-space:nowrap">3500.0</div><div class="a" style="left:1219px;top:727px;width:264px;height:14px;font:10.7px 'Liberation Sans',sans-serif;color:#000;line-height:15px;white-space:nowrap">=</div><div class="a" style="left:1138px;top:727px;width:1px;height:15px;background-image:linear-gradient(#808080 50%,transparent 50%);background-size:1px 2px"></div><div class="a" style="left:1218px;top:727px;width:1px;height:15px;background-image:linear-gradient(#808080 50%,transparent 50%);background-size:1px 2px"></div><div class="a" style="left:1482px;top:727px;width:1px;height:15px;background-image:linear-gradient(#808080 50%,transparent 50%);background-size:1px 2px"></div><div class="a" style="left:975px;top:742px;width:508px;height:15px;background-image:linear-gradient(90deg,#808080 50%,transparent 50%);background-size:2px 1px;background-repeat:repeat-x;background-position:0 14px"></div><div class="a" style="left:976px;top:742px;width:160px;height:14px;font:11px 'Liberation Sans',sans-serif;color:#000;line-height:15px;white-space:nowrap">Panel Depth (default)</div><div class="a" style="left:1140px;top:742px;width:78px;height:14px;font:11px 'Liberation Sans',sans-serif;color:#000;line-height:15px;white-space:nowrap">200.0</div><div class="a" style="left:1219px;top:742px;width:264px;height:14px;font:10.7px 'Liberation Sans',sans-serif;color:#000;line-height:15px;white-space:nowrap">=</div><div class="a" style="left:1138px;top:742px;width:1px;height:15px;background-image:linear-gradient(#808080 50%,transparent 50%);background-size:1px 2px"></div><div class="a" style="left:1218px;top:742px;width:1px;height:15px;background-image:linear-gradient(#808080 50%,transparent 50%);background-size:1px 2px"></div><div class="a" style="left:1482px;top:742px;width:1px;height:15px;background-image:linear-gradient(#808080 50%,transparent 50%);background-size:1px 2px"></div><div class="a" style="left:975px;top:757px;width:508px;height:15px;background-image:linear-gradient(90deg,#808080 50%,transparent 50%);background-size:2px 1px;background-repeat:repeat-x;background-position:0 14px"></div><div class="a" style="left:976px;top:757px;width:160px;height:14px;font:11px 'Liberation Sans',sans-serif;color:#000;line-height:15px;white-space:nowrap">Blade Spacing (default)</div><div class="a" style="left:1140px;top:757px;width:78px;height:14px;font:11px 'Liberation Sans',sans-serif;color:#000;line-height:15px;white-space:nowrap">100.0</div><div class="a" style="left:1219px;top:757px;width:264px;height:14px;font:10.7px 'Liberation Sans',sans-serif;color:#000;line-height:15px;white-space:nowrap">=</div><div class="a" style="left:1138px;top:757px;width:1px;height:15px;background-image:linear-gradient(#808080 50%,transparent 50%);background-size:1px 2px"></div><div class="a" style="left:1218px;top:757px;width:1px;height:15px;background-image:linear-gradient(#808080 50%,transparent 50%);background-size:1px 2px"></div><div class="a" style="left:1482px;top:757px;width:1px;height:15px;background-image:linear-gradient(#808080 50%,transparent 50%);background-size:1px 2px"></div><div class="a" style="left:975px;top:772px;width:508px;height:15px;background-image:linear-gradient(90deg,#808080 50%,transparent 50%);background-size:2px 1px;background-repeat:repeat-x;background-position:0 14px"></div><div class="a" style="left:976px;top:772px;width:160px;height:14px;font:11px 'Liberation Sans',sans-serif;color:#808080;line-height:15px;white-space:nowrap">Blade Length (default)</div><div class="a" style="left:1140px;top:772px;width:78px;height:14px;font:11px 'Liberation Sans',sans-serif;color:#808080;line-height:15px;white-space:nowrap">3450.0</div><div class="a" style="left:1219px;top:772px;width:264px;height:14px;font:10.7px 'Liberation Sans',sans-serif;color:#000;line-height:15px;white-space:nowrap">= Panel Length - (Panel thickness * 2)</div><div class="a" style="left:1138px;top:772px;width:1px;height:15px;background-image:linear-gradient(#808080 50%,transparent 50%);background-size:1px 2px"></div><div class="a" style="left:1218px;top:772px;width:1px;height:15px;background-image:linear-gradient(#808080 50%,transparent 50%);background-size:1px 2px"></div><div class="a" style="left:1482px;top:772px;width:1px;height:15px;background-image:linear-gradient(#808080 50%,transparent 50%);background-size:1px 2px"></div><div class="a" style="left:975px;top:787px;width:508px;height:15px;background-image:linear-gradient(90deg,#808080 50%,transparent 50%);background-size:2px 1px;background-repeat:repeat-x;background-position:0 14px"></div><div class="a" style="left:976px;top:787px;width:160px;height:14px;font:11px 'Liberation Sans',sans-serif;color:#000;line-height:15px;white-space:nowrap">Panel thickness (default)</div><div class="a" style="left:1140px;top:787px;width:78px;height:14px;font:11px 'Liberation Sans',sans-serif;color:#000;line-height:15px;white-space:nowrap">25.0</div><div class="a" style="left:1219px;top:787px;width:264px;height:14px;font:10.7px 'Liberation Sans',sans-serif;color:#000;line-height:15px;white-space:nowrap">=</div><div class="a" style="left:1138px;top:787px;width:1px;height:15px;background-image:linear-gradient(#808080 50%,transparent 50%);background-size:1px 2px"></div><div class="a" style="left:1218px;top:787px;width:1px;height:15px;background-image:linear-gradient(#808080 50%,transparent 50%);background-size:1px 2px"></div><div class="a" style="left:1482px;top:787px;width:1px;height:15px;background-image:linear-gradient(#808080 50%,transparent 50%);background-size:1px 2px"></div><div class="a" style="left:975px;top:802px;width:508px;height:15px;background-image:linear-gradient(90deg,#808080 50%,transparent 50%);background-size:2px 1px;background-repeat:repeat-x;background-position:0 14px"></div><div class="a" style="left:976px;top:802px;width:160px;height:14px;font:11px 'Liberation Sans',sans-serif;color:#000;line-height:15px;white-space:nowrap">Blade Thickness (default)</div><div class="a" style="left:1140px;top:802px;width:78px;height:14px;font:11px 'Liberation Sans',sans-serif;color:#000;line-height:15px;white-space:nowrap">20.0</div><div class="a" style="left:1219px;top:802px;width:264px;height:14px;font:10.7px 'Liberation Sans',sans-serif;color:#000;line-height:15px;white-space:nowrap">=</div><div class="a" style="left:1138px;top:802px;width:1px;height:15px;background-image:linear-gradient(#808080 50%,transparent 50%);background-size:1px 2px"></div><div class="a" style="left:1218px;top:802px;width:1px;height:15px;background-image:linear-gradient(#808080 50%,transparent 50%);background-size:1px 2px"></div><div class="a" style="left:1482px;top:802px;width:1px;height:15px;background-image:linear-gradient(#808080 50%,transparent 50%);background-size:1px 2px"></div><div class="a" style="left:975px;top:817px;width:508px;height:15px;background-image:linear-gradient(90deg,#808080 50%,transparent 50%);background-size:2px 1px;background-repeat:repeat-x;background-position:0 14px"></div><div class="a" style="left:976px;top:817px;width:160px;height:14px;font:11px 'Liberation Sans',sans-serif;color:#000;line-height:15px;white-space:nowrap">Blade Depth (default)</div><div class="a" style="left:1140px;top:817px;width:78px;height:14px;font:11px 'Liberation Sans',sans-serif;color:#000;line-height:15px;white-space:nowrap">50.0</div><div class="a" style="left:1219px;top:817px;width:264px;height:14px;font:10.7px 'Liberation Sans',sans-serif;color:#000;line-height:15px;white-space:nowrap">=</div><div class="a" style="left:1138px;top:817px;width:1px;height:15px;background-image:linear-gradient(#808080 50%,transparent 50%);background-size:1px 2px"></div><div class="a" style="left:1218px;top:817px;width:1px;height:15px;background-image:linear-gradient(#808080 50%,transparent 50%);background-size:1px 2px"></div><div class="a" style="left:1482px;top:817px;width:1px;height:15px;background-image:linear-gradient(#808080 50%,transparent 50%);background-size:1px 2px"></div><div class="a" style="left:975px;top:832px;width:508px;height:15px;background-image:linear-gradient(90deg,#808080 50%,transparent 50%);background-size:2px 1px;background-repeat:repeat-x;background-position:0 14px"></div><div class="a" style="left:976px;top:832px;width:160px;height:14px;font:11px 'Liberation Sans',sans-serif;color:#000;line-height:15px;white-space:nowrap">Angle</div><div class="a" style="left:1140px;top:832px;width:78px;height:14px;font:11px 'Liberation Sans',sans-serif;color:#000;line-height:15px;white-space:nowrap">8.000°</div><div class="a" style="left:1219px;top:832px;width:264px;height:14px;font:10.7px 'Liberation Sans',sans-serif;color:#000;line-height:15px;white-space:nowrap">=</div><div class="a" style="left:1138px;top:832px;width:1px;height:15px;background-image:linear-gradient(#808080 50%,transparent 50%);background-size:1px 2px"></div><div class="a" style="left:1218px;top:832px;width:1px;height:15px;background-image:linear-gradient(#808080 50%,transparent 50%);background-size:1px 2px"></div><div class="a" style="left:1482px;top:832px;width:1px;height:15px;background-image:linear-gradient(#808080 50%,transparent 50%);background-size:1px 2px"></div><div class="a" style="left:975px;top:850px;width:508px;height:16px;background:#0a246a;font:bold 11.5px 'Liberation Sans',sans-serif;color:#fff;line-height:16px;padding-left:2px">Identity Data</div><svg class="a" style="left:1468px;top:851px" width="12" height="14"><path d="M3 6L6 3L9 6M3 10L6 7L9 10" fill="none" stroke="#fff" stroke-width="1.5"/></svg><div class="a" style="left:975px;top:866px;width:508px;height:15px;background-image:linear-gradient(90deg,#808080 50%,transparent 50%);background-size:2px 1px;background-repeat:repeat-x;background-position:0 14px"></div><div class="a" style="left:976px;top:866px;width:160px;height:14px;font:11px 'Liberation Sans',sans-serif;color:#000;line-height:15px;white-space:nowrap">Keynote</div><div class="a" style="left:1140px;top:866px;width:78px;height:14px;font:11px 'Liberation Sans',sans-serif;color:#000;line-height:15px;white-space:nowrap"></div><div class="a" style="left:1219px;top:866px;width:264px;height:14px;font:10.7px 'Liberation Sans',sans-serif;color:#000;line-height:15px;white-space:nowrap">=</div><div class="a" style="left:1138px;top:866px;width:1px;height:15px;background-image:linear-gradient(#808080 50%,transparent 50%);background-size:1px 2px"></div><div class="a" style="left:1218px;top:866px;width:1px;height:15px;background-image:linear-gradient(#808080 50%,transparent 50%);background-size:1px 2px"></div><div class="a" style="left:1482px;top:866px;width:1px;height:15px;background-image:linear-gradient(#808080 50%,transparent 50%);background-size:1px 2px"></div><div class="a" style="left:1139px;top:663px;width:79px;height:15px;border:1px solid #000"></div><div class="a" style="left:974px;top:879px;width:511px;height:1px;background:#fff"></div><div class="a" style="left:974px;top:880px;width:527px;height:10px;background:#d4d0c8"></div><div class="a" style="left:1485px;top:625px;width:15px;height:254px;background:linear-gradient(90deg,#eeede5,#fbfbf8 60%,#f3f1ea)"></div><div class="a" style="left:1486px;top:626px;width:14px;height:15px;background:linear-gradient(135deg,#dfe8fe,#bccdf7);border:1px solid #f4f7ff;border-radius:2px;box-shadow:0 1px 0 #a8b8e0"><svg class="a" style="left:-1px;top:-1px" width="14" height="15"><path d="M3.5 9.5L7.0 6.0L10.5 9.5" fill="none" stroke="#4d6185" stroke-width="2"/></svg></div><div class="a" style="left:1486px;top:863px;width:14px;height:15px;background:linear-gradient(135deg,#dfe8fe,#bccdf7);border:1px solid #f4f7ff;border-radius:2px;box-shadow:0 1px 0 #a8b8e0"><svg class="a" style="left:-1px;top:-1px" width="14" height="15"><path d="M3.5 5.5L7.0 9.0L10.5 5.5" fill="none" stroke="#4d6185" stroke-width="2"/></svg></div><div class="a" style="left:1486px;top:643px;width:14px;height:132px;background:linear-gradient(90deg,#c8d6fb,#b8ccf6);border:1px solid #f0f4ff;border-radius:2px"><svg class="a" style="left:2px;top:58px" width="10" height="10"><path d="M2 2.5h6M2 4.5h6M2 6.5h6M2 8.5h6" stroke="#8ca8e8" stroke-width="1"/></svg></div><div class="a" style="left:1520px;top:619px;width:100px;height:13px;font:10.5px 'Liberation Sans',sans-serif;color:#1a4ac0;line-height:13px">Family Types</div><div class="a" style="left:1524px;top:635px;width:96px;height:23px;background:linear-gradient(#ffffff,#f0f0ea 70%,#d8d4c8);border:1px solid #1c2c48;border-radius:3px;font:11px 'Liberation Sans',sans-serif;color:#000;text-align:center;line-height:21px;box-shadow:inset 0 0 0 1px #a8c0f0"><u>N</u>ew...</div><div class="a" style="left:1524px;top:666px;width:96px;height:22px;background:#f5f4ea;border:1px solid #cac8bb;border-radius:3px;font:11px 'Liberation Sans',sans-serif;color:#aca899;text-align:center;line-height:20px"><u>R</u>ename...</div><div class="a" style="left:1524px;top:695px;width:96px;height:22px;background:#f5f4ea;border:1px solid #cac8bb;border-radius:3px;font:11px 'Liberation Sans',sans-serif;color:#aca899;text-align:center;line-height:20px">D<u>e</u>lete</div><div class="a" style="left:1520px;top:754px;width:100px;height:13px;font:10.5px 'Liberation Sans',sans-serif;color:#1a4ac0;line-height:13px">Parameters</div><div class="a" style="left:1524px;top:773px;width:96px;height:22px;background:linear-gradient(#ffffff,#f0f0ea 70%,#d8d4c8);border:1px solid #1c2c48;border-radius:3px;font:11px 'Liberation Sans',sans-serif;color:#000;text-align:center;line-height:20px">A<u>d</u>d...</div><div class="a" style="left:1524px;top:801px;width:96px;height:22px;background:linear-gradient(#ffffff,#f0f0ea 70%,#d8d4c8);border:1px solid #1c2c48;border-radius:3px;font:11px 'Liberation Sans',sans-serif;color:#000;text-align:center;line-height:20px"><u>M</u>odify...</div><div class="a" style="left:1524px;top:832px;width:96px;height:22px;background:linear-gradient(#ffffff,#f0f0ea 70%,#d8d4c8);border:1px solid #1c2c48;border-radius:3px;font:11px 'Liberation Sans',sans-serif;color:#000;text-align:center;line-height:20px">Remo<u>v</u>e</div><div class="a" style="left:1219px;top:891px;width:96px;height:22px;background:linear-gradient(#ffffff,#f0f0ea 70%,#d8d4c8);border:1px solid #1c2c48;border-radius:3px;font:11px 'Liberation Sans',sans-serif;color:#000;text-align:center;line-height:20px;box-shadow:inset 0 0 0 1px #a8c0f0">OK</div><div class="a" style="left:1324px;top:891px;width:96px;height:22px;background:linear-gradient(#ffffff,#f0f0ea 70%,#d8d4c8);border:1px solid #1c2c48;border-radius:3px;font:11px 'Liberation Sans',sans-serif;color:#000;text-align:center;line-height:20px">Cancel</div><div class="a" style="left:1429px;top:891px;width:96px;height:22px;background:linear-gradient(#ffffff,#f0f0ea 70%,#d8d4c8);border:1px solid #1c2c48;border-radius:3px;font:11px 'Liberation Sans',sans-serif;color:#000;text-align:center;line-height:20px"><u>A</u>pply</div><div class="a" style="left:1533px;top:891px;width:96px;height:22px;background:linear-gradient(#ffffff,#f0f0ea 70%,#d8d4c8);border:1px solid #1c2c48;border-radius:3px;font:11px 'Liberation Sans',sans-serif;color:#000;text-align:center;line-height:20px"><u>H</u>elp</div></body></html>
